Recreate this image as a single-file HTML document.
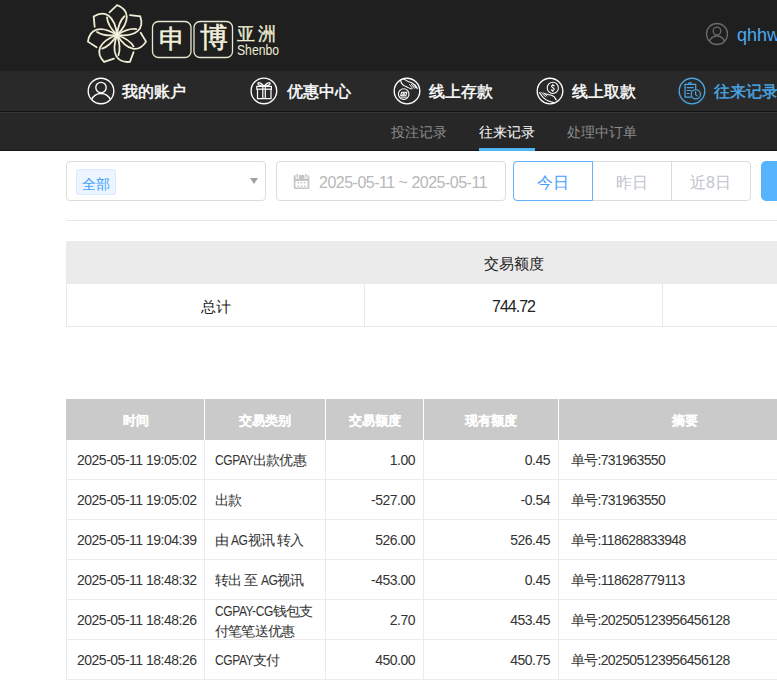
<!DOCTYPE html>
<html><head><meta charset="utf-8">
<style>
*{margin:0;padding:0;box-sizing:border-box}
html,body{width:777px;height:680px;overflow:hidden;background:#fff}
body{font-family:"Liberation Sans",sans-serif;position:relative}
.a{position:absolute;white-space:nowrap}
#hdr{left:0;top:0;width:777px;height:71px;background:#1f1f1f}
#nav{left:0;top:71px;width:777px;height:40px;background:#292929}
#l1{left:0;top:111px;width:777px;height:1px;background:#121212}
#l2{left:0;top:112px;width:777px;height:1px;background:#353535}
#sub{left:0;top:113px;width:777px;height:37px;background:#272727}
#l3{left:0;top:150px;width:777px;height:1px;background:#161616}
.nt{font-size:16px;-webkit-text-stroke:0.45px currentColor;color:#fff;line-height:20px;top:81.5px}
.st{font-size:14px;color:#8c8c8c;line-height:18px;top:123px}
.th{top:400px;height:41px;line-height:41px;text-align:center;font-size:13px;font-weight:bold;color:#fff;-webkit-text-stroke:0.15px #fff;padding-left:1px}
.td{font-size:14px;line-height:39px;color:#333;letter-spacing:-0.8px}
.n{letter-spacing:-0.5px}
.ag{display:inline-block;transform:scaleX(0.86);transform-origin:0 0;margin-right:-2.8px;letter-spacing:-0.5px}
.n2{letter-spacing:-0.62px}
.cg{display:inline-block;transform:scaleX(0.86);transform-origin:0 0;margin-right:-6.5px;letter-spacing:-0.5px}
.cg2{display:inline-block;transform:scaleX(0.86);transform-origin:0 0;margin-right:-9.5px;letter-spacing:-0.5px}
</style></head><body>
<div class="a" id="hdr"></div>
<div class="a" id="nav"></div>
<div class="a" id="l1"></div>
<div class="a" id="l2"></div>
<div class="a" id="sub"></div>
<div class="a" id="l3"></div>

<!-- logo flower -->
<svg class="a" style="left:0;top:0" width="777" height="151" viewBox="0 0 777 151">
  <g transform="translate(117,35)" fill="none" stroke="#efedd3" stroke-width="1.8" stroke-linecap="round">
    <g id="pt"><path d="M0,0 C5,-5 10,-12 9.8,-18.5 C9.5,-24 5,-28 0,-29.8 L-7.5,-22.6"/><path d="M0,0 C-5,-5 -9.5,-11 -10,-17.5"/></g>
    <use href="#pt" transform="rotate(51.429)"/>
    <use href="#pt" transform="rotate(102.857)"/>
    <use href="#pt" transform="rotate(154.286)"/>
    <use href="#pt" transform="rotate(205.714)"/>
    <use href="#pt" transform="rotate(257.143)"/>
    <use href="#pt" transform="rotate(308.571)"/>
  </g>
  <circle cx="117" cy="35" r="2" fill="#f4f3ea"/>
  <g fill="none" stroke="#e8e6d0" stroke-width="1.3">
    <rect x="152.5" y="21.5" width="38.5" height="36" rx="6"/>
    <rect x="194" y="21.5" width="38.5" height="36" rx="6"/>
  </g>
  <!-- header user icon -->
  <g fill="none" stroke="#6a6a6a" stroke-width="1.3">
    <circle cx="717" cy="34" r="10.5"/>
    <circle cx="717" cy="31" r="3.8"/>
    <path d="M709.5,41.5 C711,37.5 714,36 717,36 C720,36 723,37.5 724.5,41.5"/>
  </g>
  <!-- nav icon 1: user -->
  <g fill="none" stroke="#fff" stroke-width="1.35">
    <circle cx="101" cy="91" r="12.8"/>
    <circle cx="101" cy="87.5" r="5.2"/>
    <path d="M91.5,99.8 C93.5,95.5 97,93.5 101,93.5 C105,93.5 108.5,95.5 110.5,99.8"/>
  </g>
  <!-- nav icon 2: gift -->
  <g transform="translate(248,75)" fill="none" stroke="#fff" stroke-width="1.2">
    <circle cx="15.9" cy="15.9" r="12.8" stroke-width="1.35"/>
    <rect x="8.8" y="11.4" width="14.6" height="2.8"/>
    <path d="M9.5,14.2 V23.7 H23 V14.2"/>
    <path d="M14.8,11.4 V23.7 M17.3,11.4 V23.7"/>
    <path d="M16,11.2 C13.5,8.5 11,6.8 10,8 C9.2,9.3 11.5,11 16,11.2 Z"/>
    <path d="M16,11.2 C18.5,8.5 21,6.8 22,8 C22.8,9.3 20.5,11 16,11.2 Z"/>
  </g>
  <!-- nav icon 3: deposit -->
  <g transform="translate(391,75)" fill="none" stroke="#fff" stroke-width="1.1" stroke-linecap="round" stroke-linejoin="round">
    <circle cx="16" cy="16" r="12.8" stroke-width="1.35"/>
    <circle cx="12.7" cy="19.1" r="5.3"/>
    <path d="M9.7,20.7 L10.7,17.2 H15.9 L14.9,20.7 Z"/>
    <path d="M11.3,20.4 L12.6,17.5 L12.9,20.4 L14.2,17.5 M9.9,22.2 H15.4" stroke-width="0.9"/>
    <path d="M9.4,4.9 C10,8 12.5,10.8 15,11.6 C17,12.4 18.5,13.5 20.3,13.9"/>
    <path d="M13,4.1 C15.5,6 18,7 20.8,7.8 C23,8.8 25.2,11.3 26.3,13.6"/>
    <path d="M18.6,9.6 L21.6,13.4 M20.2,9.2 L23.6,13.3 M22,9.2 L25,13" stroke-width="0.9"/>
  </g>
  <!-- nav icon 4: withdraw -->
  <g transform="translate(534,75)" fill="none" stroke="#fff" stroke-width="1.1" stroke-linecap="round" stroke-linejoin="round">
    <circle cx="16" cy="16" r="12.8" stroke-width="1.35"/>
    <circle cx="18.8" cy="12.9" r="5.6"/>
    <path d="M20.2,10.8 C19.6,10 17.7,10 17.5,11.1 C17.3,12.4 20.3,12.6 20.2,14.3 C20.1,15.5 17.9,15.6 17.2,14.9 M18.8,9.3 V10 M18.8,15.6 V16.4"/>
    <path d="M5.6,17.6 C7.5,21.2 10.5,24.5 14.5,26 C16.5,26.8 18.5,27.4 20,27.6"/>
    <path d="M10.5,18.6 C13,19.6 15.5,20 17.5,20.2 C19.5,20.8 21.3,22.6 22.2,25"/>
    <path d="M7,17.4 L11.5,21.6 M9.2,17.6 L13,21" stroke-width="0.9"/>
  </g>
  <!-- nav icon 5: records -->
  <g transform="translate(676,75)" fill="none" stroke="#4aa6e2" stroke-width="1.2">
    <circle cx="16" cy="16" r="12.8" stroke-width="1.35"/>
    <path d="M15.5,22.1 H9 V9.4 H19.7 V14"/>
    <path d="M12.5,9.2 C12.5,7 15.6,7 15.6,9.2"/>
    <path d="M10.6,12.7 H17.6 M10.6,15.5 H15.5 M10.6,18.5 H13.5"/>
    <circle cx="19.8" cy="19.3" r="4.6"/>
    <path d="M19.6,16.2 V19.6 L21.6,21.4"/>
  </g>
  <!-- subnav underline -->
  <rect x="479" y="148" width="56" height="3" fill="#4fb6f2"/>
</svg>

<div class="a" style="left:159px;top:22px;font-size:26px;line-height:34px;color:#f2f0dc;-webkit-text-stroke:0.5px #f2f0dc">申</div>
<div class="a" style="left:200px;top:21px;font-size:28px;line-height:34px;color:#f2f0dc;-webkit-text-stroke:0.5px #f2f0dc">博</div>
<div class="a" style="left:237px;top:23px;font-size:18px;line-height:22px;color:#efedd5;letter-spacing:3px;-webkit-text-stroke:0.3px #efedd5">亚洲</div>
<div class="a" style="left:237px;top:42px;font-size:14px;line-height:16px;color:#efedd5;transform:scaleX(0.87);transform-origin:0 0">Shenbo</div>
<div class="a" style="left:737px;top:24px;font-size:18px;line-height:22px;color:#4aaaf0">qhhw</div>

<div class="a nt" style="left:122px">我的账户</div>
<div class="a nt" style="left:287px">优惠中心</div>
<div class="a nt" style="left:429px">线上存款</div>
<div class="a nt" style="left:572px">线上取款</div>
<div class="a nt" style="left:714px;color:#4aa6e2">往来记录</div>

<div class="a st" style="left:391px">投注记录</div>
<div class="a st" style="left:479px;color:#fff">往来记录</div>
<div class="a st" style="left:567px">处理中订单</div>


<!-- filters -->
<div class="a" style="left:66px;top:161px;width:200px;height:40px;border:1px solid #dcdcdc;border-radius:4px"></div>
<div class="a" style="left:76px;top:169px;width:40px;height:26px;background:#ecf5ff;border:1px solid #d9ecff;border-radius:3px"></div>
<div class="a" style="left:82px;top:174px;font-size:14px;line-height:20px;color:#409eff">全部</div>
<svg class="a" style="left:250px;top:178px" width="8" height="6"><path d="M0,0 H8 L4,6 Z" fill="#a0a0a0"/></svg>
<div class="a" style="left:276px;top:161px;width:230px;height:40px;border:1px solid #dcdcdc;border-radius:4px"></div>
<svg class="a" style="left:288px;top:168px" width="28" height="26" viewBox="0 0 28 26">
  <rect x="5.7" y="7" width="15.7" height="14" rx="1.5" fill="#c6c6c6"/>
  <rect x="7.5" y="13" width="12" height="6.5" fill="#fff"/>
  <g fill="#cbcbcb"><rect x="9.3" y="13.9" width="1.7" height="1.6"/><rect x="12.6" y="13.9" width="1.7" height="1.6"/><rect x="15.8" y="13.9" width="1.7" height="1.6"/><rect x="9.3" y="17.4" width="1.7" height="1.6"/><rect x="12.6" y="17.4" width="1.7" height="1.6"/><rect x="15.8" y="17.4" width="1.7" height="1.6"/></g>
  <rect x="7.6" y="5.2" width="3.4" height="5.6" rx="1.6" fill="#fff"/><rect x="16.3" y="5.2" width="3.4" height="5.6" rx="1.6" fill="#fff"/>
  <rect x="8.5" y="5.8" width="1.6" height="4" rx="0.8" fill="#c6c6c6"/><rect x="17.2" y="5.8" width="1.6" height="4" rx="0.8" fill="#c6c6c6"/>
</svg>
<div class="a" style="left:319px;top:173px;font-size:16px;line-height:20px;color:#b8b8b8;letter-spacing:-0.5px">2025-05-11 ~ 2025-05-11</div>
<div class="a" style="left:513px;top:161px;width:238px;height:40px;border:1px solid #dcdcdc;border-radius:4px"></div>
<div class="a" style="left:592px;top:161px;width:1px;height:40px;background:#dcdcdc"></div>
<div class="a" style="left:671px;top:161px;width:1px;height:40px;background:#dcdcdc"></div>
<div class="a" style="left:513px;top:161px;width:80px;height:40px;border:1px solid #66b1ff;border-radius:4px 0 0 4px"></div>
<div class="a" style="left:537px;top:173px;font-size:16px;line-height:20px;color:#409eff">今日</div>
<div class="a" style="left:616px;top:173px;font-size:16px;line-height:20px;color:#c0c4cc">昨日</div>
<div class="a" style="left:690px;top:173px;font-size:16px;line-height:20px;color:#c0c4cc">近8日</div>
<div class="a" style="left:761px;top:161px;width:40px;height:40px;background:#55b4fd;border-radius:5px"></div>
<div class="a" style="left:66px;top:220px;width:711px;height:1px;background:#e6e6e6"></div>

<!-- summary -->
<div class="a" style="left:66px;top:241px;width:711px;height:43px;background:#ebebeb"></div>
<div class="a" style="left:66px;top:284px;width:711px;height:43px;border-left:1px solid #e8e8e8;border-bottom:1px solid #e8e8e8"></div>
<div class="a" style="left:364px;top:284px;width:1px;height:42px;background:#e8e8e8"></div>
<div class="a" style="left:662px;top:284px;width:1px;height:42px;background:#e8e8e8"></div>
<div class="a" style="left:364px;top:241px;width:298px;text-align:center;font-size:15px;line-height:43px;color:#222;padding-left:2px;padding-top:1px">交易额度</div>
<div class="a" style="left:66px;top:284px;width:298px;text-align:center;font-size:15px;line-height:43px;color:#222;padding-left:2px;padding-top:1px">总计</div>
<div class="a" style="left:364px;top:284px;width:298px;text-align:center;font-size:16px;line-height:43px;color:#222;letter-spacing:-1px;padding-left:1px;padding-top:1px">744.72</div>


<!-- main table -->
<div class="a" style="left:66px;top:399px;width:711px;height:41px;background:#cacaca"></div>
<div class="a" style="left:204px;top:399px;width:1px;height:41px;background:#fff"></div>
<div class="a" style="left:325px;top:399px;width:1px;height:41px;background:#fff"></div>
<div class="a" style="left:423px;top:399px;width:1px;height:41px;background:#fff"></div>
<div class="a" style="left:558px;top:399px;width:1px;height:41px;background:#fff"></div>
<div class="a th" style="left:66px;width:138px">时间</div>
<div class="a th" style="left:204px;width:121px">交易类别</div>
<div class="a th" style="left:325px;width:98px">交易额度</div>
<div class="a th" style="left:423px;width:135px">现有额度</div>
<div class="a th" style="left:558px;width:252px">摘要</div>
<div class="a" style="left:66px;top:440px;width:1px;height:240px;background:#ebebeb"></div>
<div class="a" style="left:204px;top:440px;width:1px;height:240px;background:#ebebeb"></div>
<div class="a" style="left:325px;top:440px;width:1px;height:240px;background:#ebebeb"></div>
<div class="a" style="left:423px;top:440px;width:1px;height:240px;background:#ebebeb"></div>
<div class="a" style="left:558px;top:440px;width:1px;height:240px;background:#ebebeb"></div>
<div class="a" style="left:66px;top:479px;width:711px;height:1px;background:#ebebeb"></div>
<div class="a td n" style="left:77px;top:441px">2025-05-11 19:05:02</div>
<div class="a td" style="left:215px;top:441px"><span class="cg">CGPAY</span>出款优惠</div>
<div class="a td n" style="left:325px;width:90px;text-align:right;top:441px">1.00</div>
<div class="a td n" style="left:423px;width:127px;text-align:right;top:441px">0.45</div>
<div class="a td" style="left:571px;top:441px">单号<span class="n2">:731963550</span></div>
<div class="a" style="left:66px;top:519px;width:711px;height:1px;background:#ebebeb"></div>
<div class="a td n" style="left:77px;top:481px">2025-05-11 19:05:02</div>
<div class="a td" style="left:215px;top:481px">出款</div>
<div class="a td n" style="left:325px;width:90px;text-align:right;top:481px">-527.00</div>
<div class="a td n" style="left:423px;width:127px;text-align:right;top:481px">-0.54</div>
<div class="a td" style="left:571px;top:481px">单号<span class="n2">:731963550</span></div>
<div class="a" style="left:66px;top:559px;width:711px;height:1px;background:#ebebeb"></div>
<div class="a td n" style="left:77px;top:521px">2025-05-11 19:04:39</div>
<div class="a td" style="left:215px;top:521px">由 <span class="ag">AG</span>视讯 转入</div>
<div class="a td n" style="left:325px;width:90px;text-align:right;top:521px">526.00</div>
<div class="a td n" style="left:423px;width:127px;text-align:right;top:521px">526.45</div>
<div class="a td" style="left:571px;top:521px">单号<span class="n2">:118628833948</span></div>
<div class="a" style="left:66px;top:599px;width:711px;height:1px;background:#ebebeb"></div>
<div class="a td n" style="left:77px;top:561px">2025-05-11 18:48:32</div>
<div class="a td" style="left:215px;top:561px">转出 至 <span class="ag">AG</span>视讯</div>
<div class="a td n" style="left:325px;width:90px;text-align:right;top:561px">-453.00</div>
<div class="a td n" style="left:423px;width:127px;text-align:right;top:561px">0.45</div>
<div class="a td" style="left:571px;top:561px">单号<span class="n2">:118628779113</span></div>
<div class="a" style="left:66px;top:639px;width:711px;height:1px;background:#ebebeb"></div>
<div class="a td n" style="left:77px;top:601px">2025-05-11 18:48:26</div>
<div class="a td" style="left:215px;top:600px;line-height:20px;padding-top:1px"><span class="cg2">CGPAY-CG</span>钱包支<br>付笔笔送优惠</div>
<div class="a td n" style="left:325px;width:90px;text-align:right;top:601px">2.70</div>
<div class="a td n" style="left:423px;width:127px;text-align:right;top:601px">453.45</div>
<div class="a td" style="left:571px;top:601px">单号<span class="n2">:202505123956456128</span></div>
<div class="a" style="left:66px;top:679px;width:711px;height:1px;background:#ebebeb"></div>
<div class="a td n" style="left:77px;top:641px">2025-05-11 18:48:26</div>
<div class="a td" style="left:215px;top:641px"><span class="cg">CGPAY</span>支付</div>
<div class="a td n" style="left:325px;width:90px;text-align:right;top:641px">450.00</div>
<div class="a td n" style="left:423px;width:127px;text-align:right;top:641px">450.75</div>
<div class="a td" style="left:571px;top:641px">单号<span class="n2">:202505123956456128</span></div>

</body></html>
